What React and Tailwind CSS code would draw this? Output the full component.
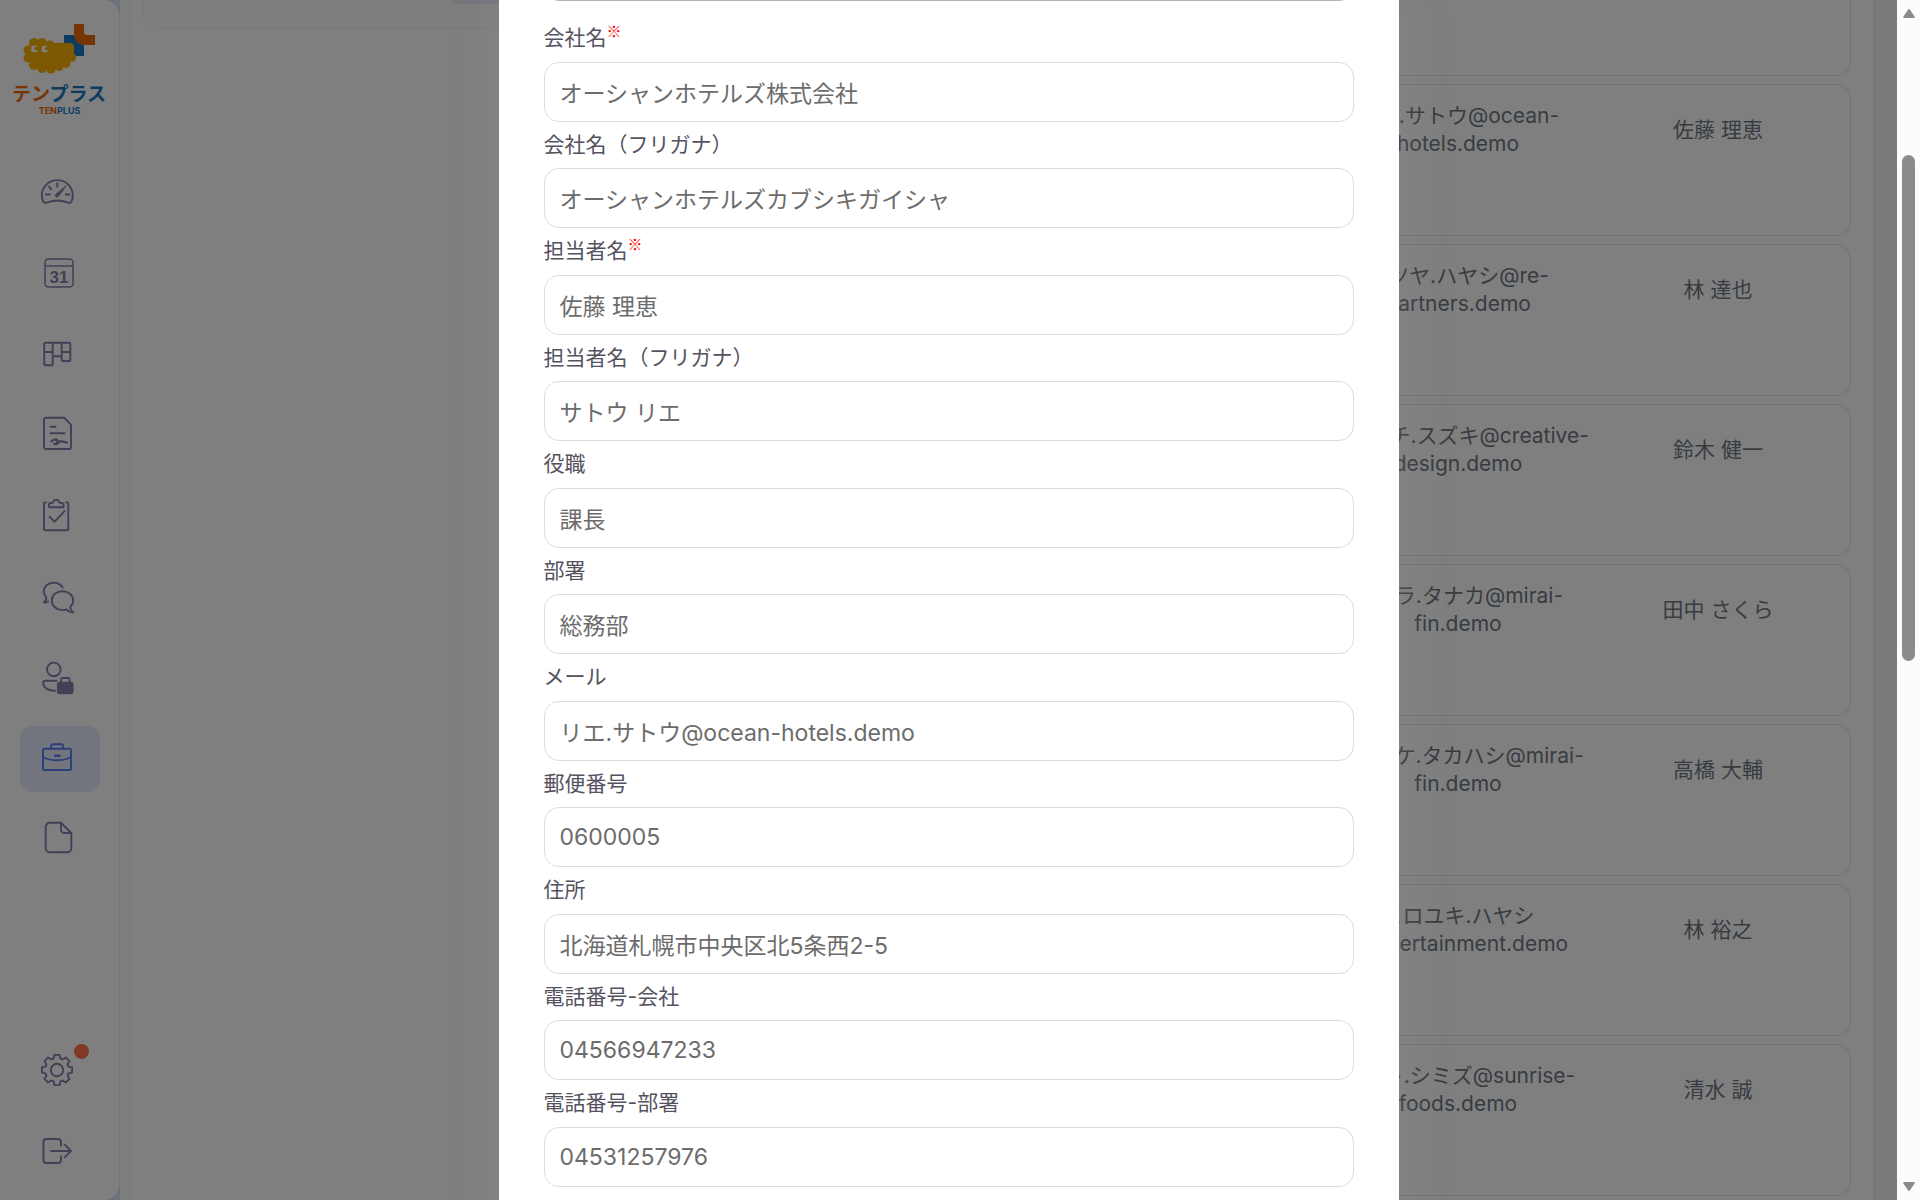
import React from "react";

const fields = [
  { id: "company", label: "会社名", required: true, value: "オーシャンホテルズ株式会社" },
  { id: "company-kana", label: "会社名（フリガナ）", value: "オーシャンホテルズカブシキガイシャ" },
  { id: "person", label: "担当者名", required: true, value: "佐藤 理恵" },
  { id: "person-kana", label: "担当者名（フリガナ）", value: "サトウ リエ" },
  { id: "title", label: "役職", value: "課長" },
  { id: "department", label: "部署", value: "総務部" },
  { id: "mail", label: "メール", value: "リエ.サトウ@ocean-hotels.demo" },
  { id: "zip", label: "郵便番号", value: "0600005" },
  { id: "address", label: "住所", value: "北海道札幌市中央区北5条西2-5" },
  { id: "tel-company", label: "電話番号-会社", value: "04566947233" },
  { id: "tel-department", label: "電話番号-部署", value: "04531257976" },
];

const contacts = [
  ["リエ.サトウ@ocean-", "hotels.demo", "佐藤 理恵"],
  ["タツヤ.ハヤシ@re-", "partners.demo", "林 達也"],
  ["ケンイチ.スズキ@creative-", "design.demo", "鈴木 健一"],
  ["サクラ.タナカ@mirai-", "fin.demo", "田中 さくら"],
  ["ダイスケ.タカハシ@mirai-", "fin.demo", "高橋 大輔"],
  ["ヒロユキ.ハヤシ", "@entertainment.demo", "林 裕之"],
  ["マコト.シミズ@sunrise-", "foods.demo", "清水 誠"],
];

function Icon({ children }) {
  return (
    <svg
      className="size-10 shrink-0"
      viewBox="0 1 40 40"
      fill="none"
      stroke="currentColor"
      strokeWidth="1.9"
      strokeLinecap="round"
      strokeLinejoin="round"
      aria-hidden="true"
    >
      {children}
    </svg>
  );
}

const gearPath = (() => {
  const points = [];
  for (let i = 0; i < 8; i++) {
    const c = (i * Math.PI) / 4;
    for (const [r, d] of [
      [12, -0.29],
      [15.3, -0.17],
      [15.3, 0.17],
      [12, 0.29],
    ]) {
      points.push(`${(20 + r * Math.sin(c + d)).toFixed(2)} ${(21 - r * Math.cos(c + d)).toFixed(2)}`);
    }
  }
  return `M${points.join("L")}Z`;
})();

const navIcons = [
  {
    name: "ダッシュボード",
    icon: (
      <Icon>
        <path d="M6.6 31C4.6 28 4.6 26 4.8 23A15.6 15.6 0 0 1 35.8 23C36 26 36 28 34.2 31C33.4 32 32 32 30.6 31.4C24 29 17 29 10.4 31.4C8.8 32 7.4 32 6.6 31Z" />
        <path d="M20.3 12.2v3.6M9 23.5h4M28.6 23.5h4M12 15.6l2.2 2.4" />
        <path d="M29 15L18.6 23.4a1.7 1.7 0 1 0 2.8 2Z" fill="currentColor" strokeWidth="0.8" />
      </Icon>
    ),
  },
  {
    name: "カレンダー",
    icon: (
      <Icon>
        <rect x="8" y="7" width="28" height="28" rx="3.5" strokeWidth="1.5" />
        <path d="M8 14h28" strokeWidth="1.5" />
        <text
          x="22"
          y="30.5"
          textAnchor="middle"
          fontSize="17"
          fontWeight="700"
          fontFamily="Liberation Sans, sans-serif"
          fill="currentColor"
          stroke="none"
        >
          31
        </text>
      </Icon>
    ),
  },
  {
    name: "ボード",
    icon: (
      <Icon>
        <path d="M8 9.7h24.5a.8.8 0 0 1 .8.8V27.2a.8.8 0 0 1-.8.8h-7a.8.8 0 0 1-.8-.8V9.7M15.7 9.7v21.6a1 1 0 0 1-1 1H8.2a1 1 0 0 1-1-1V10.5a.8.8 0 0 1 .8-.8M7.2 19h8.5M24.7 19h8.5M15.7 23.3h9" />
      </Icon>
    ),
  },
  {
    name: "契約",
    icon: (
      <Icon>
        <path d="M9 3.7h18.3L34 10.8V33a2 2 0 0 1-2 2H9a2 2 0 0 1-2-2V5.700a2 2 0 0 1 2-2Z" />
        <path d="M13.400 12.700h5.200M13.400 19.300h14.200" />
        <path
          d="M14.500 27.200c1.500-1.900 4.400-2.200 5.800-.8 1 1.200-1 3.600-3 3.600 3.500 1 4-1.500 5.500-2.600 1.200-.6 2 .7 3 .3 1.600-.4 2.400.7 4 1"
          strokeWidth="2.300"
        />
      </Icon>
    ),
  },
  {
    name: "タスク",
    icon: (
      <Icon>
        <path d="M9 7.400H8a1 1 0 0 0-1 1v25.900a1 1 0 0 0 1 1h22.300a1 1 0 0 0 1-1V8.400a1 1 0 0 0-1-1h-1" />
        <path d="M12 12.300V9.500a1.500 1.500 0 0 1 1.500-1.500h1.600c.8 0 1-.6 1.300-1.400a3 3 0 0 1 5.500 0c.3.800.6 1.400 1.400 1.400h1.700a1.500 1.500 0 0 1 1.500 1.500v2.800Z" />
        <path d="M12.500 21.600l5.200 5.100 9.800-10.500" />
      </Icon>
    ),
  },
  {
    name: "チャット",
    icon: (
      <Icon>
        <path d="M25.600 11.400C23.600 8.400 20 6.800 16.600 6.800 11 6.800 6.800 10.600 6.800 15.600c0 2.400 1 4.400 2.600 6-.1 1.800-.8 3.400-2.600 4.700 1.600.4 3.100.1 4.400-.8" />
        <path d="M25.500 15.200c6 0 10.700 4 10.700 9.200 0 2.600-1.200 4.800-3 6.500.1 2.200 1 4 2.900 5.500-2.700 0-4.900-1.100-6.400-2.900-1.300.4-2.700.6-4.200.6-6 0-10.700-4.200-10.700-9.700s4.700-9.200 10.700-9.200Z" />
      </Icon>
    ),
  },
  {
    name: "担当者",
    icon: (
      <Icon>
        <circle cx="16.800" cy="12.400" r="6.800" />
        <path d="M19.600 23.800H8.200a2 2 0 0 0-2 2c0 5 5 7.900 11.800 7.900" />
        <rect x="20.800" y="25.800" width="14.800" height="10.400" rx="1.500" fill="currentColor" />
        <path d="M24 25.500v-3a1.500 1.500 0 0 1 1.500-1.500h5.600a1.500 1.500 0 0 1 1.500 1.500v3" />
      </Icon>
    ),
  },
  {
    name: "顧客",
    active: true,
    icon: (
      <Icon>
        <path d="M7 10.700h26a1 1 0 0 1 1 1V31a1 1 0 0 1-1 1H7a1 1 0 0 1-1-1V11.700a1 1 0 0 1 1-1Z" />
        <path d="M14.200 10.500V7.800A1.600 1.600 0 0 1 15.800 6.200h8.600A1.600 1.600 0 0 1 26 7.800v2.700M6 19c8.500 4.400 19.500 4.400 28 0" />
        <path d="M18 17.700h4.500" strokeWidth="2.400" />
      </Icon>
    ),
  },
  {
    name: "ファイル",
    icon: (
      <Icon>
        <path d="M12.700 3.800H24L34.300 14V29.300a4 4 0 0 1-4 4H12.700a4 4 0 0 1-4-4V7.800a4 4 0 0 1 4-4Z" />
        <path d="M24 3.800V10.500A3.500 3.500 0 0 0 27.500 14h6.800" />
      </Icon>
    ),
  },
];

function Logo() {
  return (
    <svg className="h-[100px] w-[120px]" viewBox="0 20 120 100" role="img" aria-label="テンプラス">
      <path d="M64 35h11q1 8 9 10v11h-10v-8q0-3-3-3h-7Z" fill="#1c78c0" />
      <path d="M74 24h10v8q0 3 3 3h8v10H86q-12 0-12-12Z" fill="#ee6a08" />
      <g fill="#f8b000">
        <ellipse cx="48" cy="56" rx="21" ry="13" />
        <path d="M54 43h17q3 1 3 5v9l-12 10H48Z" />
        <circle cx="34" cy="43" r="5" />
        <circle cx="42" cy="42.500" r="4.600" />
        <circle cx="50" cy="45" r="4.500" />
        <circle cx="59" cy="47" r="4.500" />
        <circle cx="28" cy="50" r="4.500" />
        <circle cx="28" cy="58" r="4.500" />
        <circle cx="34" cy="65" r="5" />
        <circle cx="42" cy="68.500" r="4.500" />
        <circle cx="51" cy="69" r="4.600" />
        <circle cx="59" cy="66.500" r="4.500" />
        <circle cx="66" cy="63.500" r="4.500" />
        <circle cx="72" cy="57.500" r="4.200" />
      </g>
      <circle cx="34.500" cy="49" r="3.500" fill="#fff" />
      <circle cx="36.500" cy="48.500" r="2.100" fill="#f8b000" />
      <circle cx="45" cy="49" r="3.500" fill="#fff" />
      <circle cx="47" cy="48.500" r="2.100" fill="#f8b000" />
      <text x="59" y="101" textAnchor="middle" fontSize="19" fontWeight="700" fontFamily="Noto Sans CJK JP, sans-serif">
        <tspan fill="#ee6a08">テン</tspan>
        <tspan fill="#1c78c0">プラス</tspan>
      </text>
      <text x="59.500" y="114" textAnchor="middle" fontSize="9" fontWeight="700" fontFamily="Inter, sans-serif">
        <tspan fill="#ee6a08">TEN</tspan>
        <tspan fill="#1c78c0">PLUS</tspan>
      </text>
    </svg>
  );
}

function NavLink({ name, active, children }) {
  return (
    <a
      href="#"
      aria-label={name}
      className={
        active
          ? "relative flex h-[66px] items-center rounded-xl bg-[#e6eaff] pl-[17px] text-[#5a80f5]"
          : "relative flex h-[66px] items-center rounded-xl pl-[17px] text-[#867fac]"
      }
    >
      {children}
    </a>
  );
}

function Sidebar() {
  return (
    <div className="w-[120px] shrink-0 bg-[#dbe2fb]">
      <aside className="flex h-full flex-col rounded-r-2xl border-r border-[#ececec] bg-white pt-5">
        <Logo />
        <nav className="mt-[39px] flex flex-1 flex-col gap-[15px] px-5 pr-[19px] pb-4">
          {navIcons.map((item) => (
            <NavLink key={item.name} name={item.name} active={item.active}>
              {item.icon}
            </NavLink>
          ))}
          <div className="mt-auto flex flex-col gap-[15px]">
            <NavLink name="設定">
              <Icon>
                <path d={gearPath} />
                <circle cx="20" cy="21" r="6.200" />
              </Icon>
              <span className="absolute top-[7px] right-[11px] size-[15px] rounded-full bg-[#ff744a]" />
            </NavLink>
            <NavLink name="ログアウト">
              <Icon>
                <path d="M24 15.800V12A3 3 0 0 0 21 9H9.500a3 3 0 0 0-3 3V30a3 3 0 0 0 3 3H21a3 3 0 0 0 3-3V26.200M14 21h19.500M27.700 14.700L34 21L27.700 27.300" />
              </Icon>
            </NavLink>
          </div>
        </nav>
      </aside>
    </div>
  );
}

function ContactTable() {
  return (
    <table className="-mt-[84px] w-[524px] shrink-0 table-fixed border-separate border-spacing-x-0 border-spacing-y-2 text-center text-[21px] leading-7 text-[#6f7884]">
      <tbody>
        <tr>
          <td className="h-[152px] border-y border-[#e2e2e2]" />
          <td className="rounded-r-[15px] border-y border-r border-[#e2e2e2]" />
        </tr>
        {contacts.map(([user, domain, name]) => (
          <tr key={user}>
            <td className="h-[152px] border-y border-[#e2e2e2] pt-[17px] align-top whitespace-nowrap">
              {user}
              <br />
              {domain}
            </td>
            <td className="rounded-r-[15px] border-y border-r border-[#e2e2e2] pt-[31px] pr-[3px] align-top">
              {name}
            </td>
          </tr>
        ))}
      </tbody>
    </table>
  );
}

function EditDialog() {
  return (
    <div className="absolute inset-0 flex justify-center overflow-hidden bg-black/50">
      <form
        role="dialog"
        aria-label="顧客編集"
        className="h-max w-full max-w-[900px] bg-white px-[45px] pb-12 shadow-[0_0_45px_rgba(160,160,160,0.25)]"
      >
        <input
          aria-label="種別"
          className="-mt-[59px] mb-3.5 block h-[60px] w-full rounded-[15px] border border-[#b4b4b4] px-3.5"
        />
        {fields.map((field) => (
          <div key={field.id} className="pt-[7px]">
            <label htmlFor={field.id} className="mb-2 block text-[21px] leading-normal text-[#55525f]">
              {field.label}
              {field.required && (
                <sup className="-top-2 align-baseline font-['Noto_Sans_CJK_JP',sans-serif] text-[15px] text-[#ff0000]">
                  ※
                </sup>
              )}
            </label>
            <input
              id={field.id}
              type="text"
              defaultValue={field.value}
              className="block h-[60px] w-full rounded-[15px] border border-[#dcdcdc] bg-white px-[15px] text-[23px] text-[#6c6c6c] outline-none"
            />
          </div>
        ))}
      </form>
    </div>
  );
}

function Scrollbar() {
  return (
    <div className="flex w-[23px] shrink-0 flex-col items-center bg-[#fcfcfc] py-[9px]" aria-hidden="true">
      <svg className="h-[9px] w-3" viewBox="0 0 12 9" fill="#8b8b8b">
        <path d="M5 .8Q6-.6 7 .8L11.600 7.500Q12 9 10.800 9H1.200Q0 9 .4 7.500Z" />
      </svg>
      <div className="mt-[137px] h-[506px] w-[13px] rounded-full bg-[#8b8b8b]" />
      <svg className="mt-auto h-[9px] w-3" viewBox="0 0 12 9" fill="#8b8b8b">
        <path d="M5 8.200Q6 9.600 7 8.200L11.600 1.500Q12 0 10.800 0H1.200Q0 0 .4 1.500Z" />
      </svg>
    </div>
  );
}

export default function App() {
  return (
    <div className="flex h-screen overflow-hidden font-['Inter','Noto_Sans_CJK_JP',sans-serif]">
      <div className="relative flex min-w-0 flex-1 overflow-hidden bg-[#f4f4f8]">
        <Sidebar />
        <div className="w-[11px] shrink-0 bg-[#f8faff]" />
        <main className="mr-[22px] flex min-w-0 flex-1 items-start justify-between self-stretch border-r border-[#e2e2e2] bg-white pr-[23px] pl-3">
          <section className="flex h-7 w-2/5 justify-end rounded-b-[15px] border border-t-0 border-[#f0f0f0] bg-[#fcfcfc]">
            <div className="h-1 w-[372px] rounded-b-lg bg-[#ececfa]" />
          </section>
          <ContactTable />
        </main>
        <EditDialog />
      </div>
      <Scrollbar />
    </div>
  );
}
